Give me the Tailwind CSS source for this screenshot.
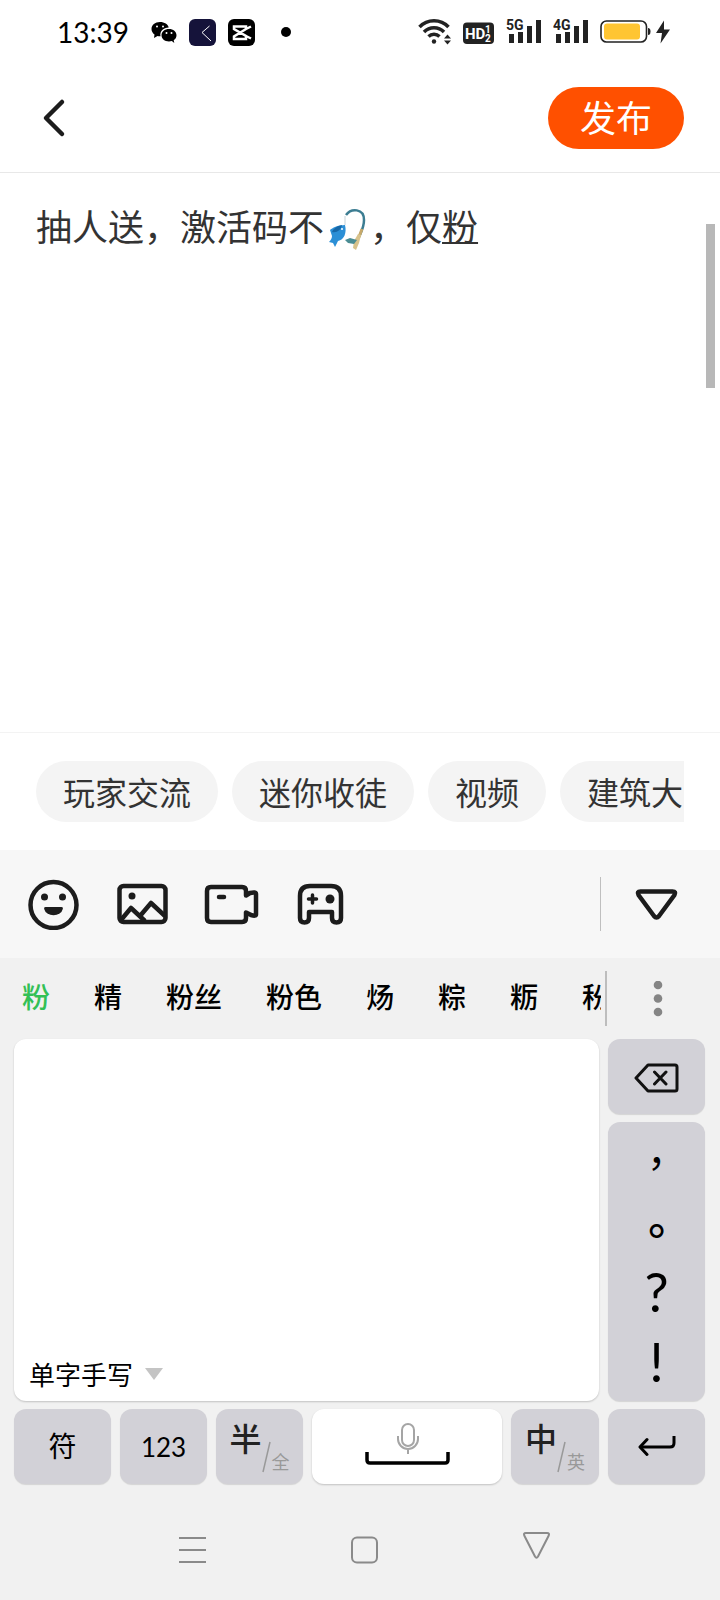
<!DOCTYPE html>
<html lang="zh-CN">
<head>
  <meta charset="UTF-8">
  <meta name="viewport" content="width=device-width, initial-scale=1.0">
  <title>发布帖子</title>
  <script src="https://cdn.jsdelivr.net/npm/@tailwindcss/browser@4"></script>
</head>
<body class="min-h-screen flex flex-col bg-white text-[#333333] font-['Noto_Sans_CJK_SC',sans-serif] overflow-x-hidden">

  <!-- 状态栏 -->
  <div class="h-16 flex items-center justify-between pl-[57px] pr-[50px]">
    <div class="flex items-center gap-3">
      <span class="w-[82px] text-[28px] leading-8 text-black font-['Lato',sans-serif]">13:39</span>
      <svg class="w-[26px] h-6" viewBox="0 0 26 24">
        <path d="M9 2C4 2 .5 5 .5 9c0 2.300 1.200 4.200 3 5.500L3 18l3.500-2c1 .3 2 .4 3 .3C8.500 11 12.500 7.500 17.700 7.500 17 4.300 13.500 2 9 2z" fill="#000"/>
        <path d="M18 9c-4.300 0-7.500 2.700-7.500 6.200s3.200 6.200 7.500 6.200c1 0 2-.1 2.800-.4L23.300 23l-.6-2.700c1.700-1.200 2.800-3 2.800-5.100C25.500 11.700 22.300 9 18 9z" fill="#000"/>
        <g fill="#fff"><circle cx="6" cy="6.500" r="1"/><circle cx="12" cy="6.500" r="1"/><circle cx="15.500" cy="13" r="1"/><circle cx="20.500" cy="13" r="1"/></g>
      </svg>
      <svg class="w-[27px] h-[27px]" viewBox="0 0 27 27">
        <rect width="27" height="27" rx="6" fill="#15133a"/>
        <path d="M20.500 7L13 13.500l9 8.500" fill="none" stroke="#fff" stroke-width="1"/>
      </svg>
      <svg class="w-[27px] h-[27px]" viewBox="0 0 27 27">
        <rect width="27" height="27" rx="6" fill="#000"/>
        <path d="M23 7.500L18 10M23 19.500L18 17M18 10V7.500H6v2.500l12 7v3H6v-2.500L18 10" fill="none" stroke="#fff" stroke-width="2.500"/>
      </svg>
      <span class="ml-[14px] w-[10px] h-[10px] rounded-full bg-black"></span>
    </div>
    <div class="flex items-center gap-3 text-[#222222]">
      <svg class="w-[34px] h-[26px]" viewBox="0 0 34 26" fill="none" stroke="currentColor" stroke-width="3.500">
        <path d="M2.500 8a20 20 0 0 1 29 0M7 13a14 14 0 0 1 20 0M11.500 17.500a8 8 0 0 1 11 0"/>
        <circle cx="17" cy="22.500" r="2.200" fill="currentColor" stroke="none"/>
        <path d="M27 19.500l3.500-4 3.500 4zM27 21.500l3.500 4 3.500-4z" fill="currentColor" stroke="none"/>
      </svg>
      <svg class="w-[31px] h-[26px]" viewBox="0 0 31 26">
        <rect y="3.500" width="31" height="21.500" rx="4" fill="currentColor"/>
        <g fill="#fff" font-family="Roboto, sans-serif" font-weight="700">
          <text x="2" y="20" font-size="15">HD</text>
          <text x="22" y="14" font-size="10">1</text>
          <text x="22" y="23" font-size="10">2</text>
        </g>
      </svg>
      <svg class="w-[35px] h-[26px]" viewBox="0 0 35 26" fill="currentColor">
        <text x="0" y="11" font-size="14" font-weight="700" font-family="Roboto, sans-serif">5G</text>
        <path d="M3 15h5v9H3zM12 13h5v11h-5zM21 7h5v17h-5zM30 1h5v23h-5z"/>
      </svg>
      <svg class="w-[35px] h-[26px]" viewBox="0 0 35 26" fill="currentColor">
        <text x="0" y="11" font-size="14" font-weight="700" font-family="Roboto, sans-serif">4G</text>
        <path d="M3 15h5v9H3zM12 13h5v11h-5zM21 7h5v17h-5zM30 1h5v23h-5z"/>
      </svg>
      <svg class="w-[70px] h-[26px]" viewBox="0 0 70 26">
        <rect x="1" y="2" width="45.500" height="21" rx="5.500" fill="none" stroke="currentColor" stroke-width="1.600"/>
        <rect x="4" y="4.500" width="36" height="16" rx="3" fill="#ffc532"/>
        <path d="M48 9q2.500 0 2.500 3.500T48 16z" fill="currentColor"/>
        <path d="M64 1.500L56 14h6l-1.500 10.500L70 10.500h-6z" fill="currentColor"/>
      </svg>
    </div>
  </div>

  <!-- 顶部栏 -->
  <header class="h-[109px] flex items-center justify-between pl-9 pr-9 border-b border-[#e8e8e8]">
    <button type="button" aria-label="返回" class="w-9 h-12 flex items-center justify-center">
      <svg class="w-6 h-10" viewBox="0 0 24 40" fill="none" stroke="#1c1c1c" stroke-width="4.500" stroke-linecap="round" stroke-linejoin="round"><path d="M20 4L4 20l16 16"/></svg>
    </button>
    <button type="button" class="w-[136px] h-[62px] pb-1 rounded-full bg-[#ff5000] text-white text-[36px] leading-[58px]">发布</button>
  </header>

  <!-- 正文输入 -->
  <main class="relative flex-1 flex flex-col">
    <div role="textbox" contenteditable="true" aria-multiline="true" aria-label="正文" class="flex-1 px-9 pt-[26px] text-[36px] leading-[52px] outline-none">抽人送，激活码不<svg class="inline-block align-middle w-[46px] h-11 -mt-1" viewBox="0 0 46 44" role="img" aria-label="钓鱼竿">
        <path d="M21 18V9" stroke="#c5d2d8" stroke-width="1" fill="none"/>
        <path d="M22 8C27 1 40 1 40 13c0 7-2 10-5 17" stroke="#3c7d92" stroke-width="2.500" fill="none"/>
        <path d="M35 30l3-8" stroke="#c8a96a" stroke-width="3"/>
        <path d="M29 41l1-7 4-7 3 1-2 8-3 7z" fill="#d8c28b"/>
        <path d="M21 33l5-2 7 2-3 4-6-1z" fill="#4a8c93"/>
        <path d="M21 18c-7 0-13 3-15 5l2 6c0 2-1 4-3 6l4 1 2 4 3-6c6-1 9-8 7-16z" fill="#2b8fd6"/>
        <path d="M18 18c-5 1-9 4-10 7 5 1 9-2 10-7z" fill="#1668a8"/>
        <circle cx="18" cy="22" r="1" fill="#fff"/>
      </svg>，仅<u class="decoration-2 underline-offset-[1px] [text-decoration-skip-ink:none]">粉</u></div>
    <span class="absolute right-[5px] top-[51px] w-[9px] h-[164px] bg-[#b8b8b8]"></span>
  </main>

  <!-- 话题 -->
  <div class="border-t border-[#f3f3f3] px-9 py-7">
    <div class="flex gap-[14px] overflow-hidden text-[32px] leading-[61px] whitespace-nowrap">
      <button type="button" class="shrink-0 px-[27px] rounded-full bg-[#f4f4f4]">玩家交流</button>
      <button type="button" class="shrink-0 px-[27px] rounded-full bg-[#f4f4f4]">迷你收徒</button>
      <button type="button" class="shrink-0 px-[27px] rounded-full bg-[#f4f4f4]">视频</button>
      <button type="button" class="shrink-0 px-[27px] rounded-full bg-[#f4f4f4]">建筑大师</button>
    </div>
  </div>

  <!-- 工具栏 -->
  <div class="h-[108px] flex items-center bg-[#f7f7f7] text-[#1c1c1c] pl-[26px] pr-[35px]">
    <div class="flex-1 flex items-center gap-[34px]">
      <button type="button" aria-label="表情">
        <svg class="w-14 h-[52px]" viewBox="0 0 56 52" fill="none" stroke="currentColor" stroke-width="4.500">
          <circle cx="27.500" cy="27" r="23"/>
          <g fill="currentColor" stroke="none"><circle cx="18.500" cy="19" r="3.500"/><circle cx="36.500" cy="19" r="3.500"/><path d="M19.500 29h16c1.500 0 1.500 1 1.300 2a9.500 8 0 0 1-18.600 0c-.2-1-.2-2 1.300-2z"/></g>
        </svg>
      </button>
      <button type="button" aria-label="图片">
        <svg class="w-14 h-[52px]" viewBox="0 0 56 52" fill="none" stroke="currentColor" stroke-width="4.500" stroke-linejoin="round">
          <rect x="3.500" y="8" width="46" height="36" rx="4"/>
          <circle cx="16" cy="18" r="3.500" fill="currentColor" stroke="none"/>
          <path d="M5 42l10-12 14 13M24 38l11-13L49 38"/>
        </svg>
      </button>
      <button type="button" aria-label="视频">
        <svg class="w-14 h-[52px] overflow-visible" viewBox="0 0 56 52" fill="none" stroke="currentColor" stroke-width="4.500" stroke-linejoin="round" stroke-linecap="round">
          <path d="M5 9h31q4 0 4 4v4.500l4-2.500q6-1.500 6 1v20.500q0 2-5 .5l-5-2.500V40q0 4-4 4H5q-4 0-4-4V13q0-4 4-4z"/>
          <path d="M13 19h5"/>
        </svg>
      </button>
      <button type="button" aria-label="游戏">
        <svg class="w-14 h-[52px]" viewBox="0 0 56 52" fill="none" stroke="currentColor" stroke-width="4.500" stroke-linejoin="round" stroke-linecap="round">
          <path d="M14 8h21q10 0 10 10v22q0 4.500-4.500 4.500T36 40v-6H13v6q0 4.500-4.500 4.500T4 40V18Q4 8 14 8z"/>
          <path d="M16.500 17v8M12.500 21h8" stroke-width="3.500"/>
          <circle cx="34" cy="21" r="4.500" fill="currentColor" stroke="none"/>
        </svg>
      </button>
    </div>
    <span class="w-px h-[54px] bg-[#bfbfbf] mr-[30px]"></span>
    <button type="button" aria-label="收起">
      <svg class="w-[54px] h-9" viewBox="0 0 54 36" fill="none" stroke="currentColor" stroke-width="4.500" stroke-linejoin="round"><path d="M9.500 5.500h32q4 0 2 3.500L28 30q-2.500 3-5 0L7.500 9q-2-3.500 2-3.500z"/></svg>
    </button>
  </div>

  <!-- 输入法 -->
  <div class="bg-[#f1f1f1] text-black">
    <div class="h-[81px] flex items-center pl-[22px]">
      <div class="flex-1 flex gap-11 mr-1 pb-[6px] overflow-hidden whitespace-nowrap text-[28px] leading-10 font-medium">
        <button type="button" class="shrink-0 text-[#33c055]">粉</button>
        <button type="button" class="shrink-0">精</button>
        <button type="button" class="shrink-0">粉丝</button>
        <button type="button" class="shrink-0">粉色</button>
        <button type="button" class="shrink-0">炀</button>
        <button type="button" class="shrink-0">粽</button>
        <button type="button" class="shrink-0">粝</button>
        <button type="button" class="shrink-0">秎</button>
      </div>
      <span class="w-[2px] h-[55px] bg-[#bdbdbd]"></span>
      <button type="button" aria-label="更多" class="w-[113px] flex justify-center pr-[11px]">
        <svg class="w-[10px] h-9" viewBox="0 0 10 36" fill="#858585"><circle cx="5" cy="4" r="4.300"/><circle cx="5" cy="17.500" r="4.300"/><circle cx="5" cy="31" r="4.300"/></svg>
      </button>
    </div>

    <div class="grid grid-cols-[97fr_87fr_87fr_190fr_88fr_97fr] grid-rows-[75px_279px_75px] gap-x-[9px] gap-y-2 pl-[14px] pr-[15px]">
      <!-- 手写区 -->
      <div class="col-span-5 row-span-2 flex items-end rounded-xl bg-white shadow-[0_1px_2px_rgba(0,0,0,0.2)] px-[15px] pb-[7px]">
        <button type="button" class="flex items-center gap-[11px] text-[26px] leading-10">
          单字手写
          <svg class="w-5 h-3" viewBox="0 0 20 12"><path d="M1 0h18l-9 12z" fill="#c4c4c4"/></svg>
        </button>
      </div>
      <button type="button" aria-label="删除" class="flex items-center justify-center rounded-xl bg-[#d2d1d7] shadow-[0_1px_1px_rgba(0,0,0,0.12)]">
        <svg class="w-[46px] h-8" viewBox="0 0 46 32" fill="none" stroke="#111" stroke-width="3" stroke-linejoin="round" stroke-linecap="round"><path d="M14 4h27q2 0 2 2v22q0 2-2 2H14L2 17zM20.500 11l11.500 12M32 11L20.500 23"/></svg>
      </button>
      <div class="grid grid-rows-4 rounded-xl bg-[#d2d1d7] shadow-[0_1px_1px_rgba(0,0,0,0.12)]">
        <button type="button" lang="zh-TW" class="pt-2 text-[40px] leading-[60px] font-['Noto_Sans_CJK_TC',sans-serif]">，</button>
        <button type="button" lang="zh-TW" class="pt-1 text-[44px] leading-[64px] font-medium font-['Noto_Sans_CJK_TC',sans-serif]">。</button>
        <button type="button" class="pb-2 text-[54px] leading-[60px] font-['Lato',sans-serif]">?</button>
        <button type="button" class="pb-2 text-[54px] leading-[60px] font-['Lato',sans-serif]">!</button>
      </div>

      <!-- 底部按键 -->
      <button type="button" class="pb-1 rounded-xl bg-[#d2d1d7] shadow-[0_1px_1px_rgba(0,0,0,0.12)] text-[28px] leading-10">符</button>
      <button type="button" class="rounded-xl bg-[#d2d1d7] shadow-[0_1px_1px_rgba(0,0,0,0.12)] text-[26px] leading-10 font-['Lato',sans-serif]">123</button>
      <button type="button" class="flex justify-center rounded-xl bg-[#d2d1d7] shadow-[0_1px_1px_rgba(0,0,0,0.12)] pt-2">
        <span class="text-[32px] leading-10 font-medium text-[#222222]">半</span>
        <svg class="w-[10px] h-8 mt-6" viewBox="0 0 10 32"><path d="M1 31L8 1" stroke="#999" stroke-width="1.500"/></svg>
        <span class="mt-8 text-[18px] leading-6 text-[#999999]">全</span>
      </button>
      <button type="button" aria-label="空格" class="flex items-center justify-center rounded-xl bg-white shadow-[0_1px_2px_rgba(0,0,0,0.2)]">
        <svg class="w-[86px] h-12" viewBox="0 0 86 48" fill="none">
          <rect x="38" y="1" width="12" height="22" rx="6" stroke="#a5a5a5" stroke-width="2"/>
          <path d="M34 13v3a10 10 0 0 0 20 0v-3M44 26v5" stroke="#a5a5a5" stroke-width="2"/>
          <path d="M3 29v8q0 3 3 3h75q3 0 3-3v-8" stroke="#000" stroke-width="3.500"/>
        </svg>
      </button>
      <button type="button" class="flex justify-center rounded-xl bg-[#d2d1d7] shadow-[0_1px_1px_rgba(0,0,0,0.12)] pt-2">
        <span class="text-[32px] leading-10 font-medium text-[#222222]">中</span>
        <svg class="w-[10px] h-8 mt-6" viewBox="0 0 10 32"><path d="M1 31L8 1" stroke="#999" stroke-width="1.500"/></svg>
        <span class="mt-8 text-[18px] leading-6 text-[#999999]">英</span>
      </button>
      <button type="button" aria-label="换行" class="flex items-center justify-center rounded-xl bg-[#d2d1d7] shadow-[0_1px_1px_rgba(0,0,0,0.12)]">
        <svg class="w-[38px] h-[22px]" viewBox="0 0 38 22" fill="none" stroke="#000" stroke-width="3"><path d="M36 0v7q0 4-4 4H2"/><path d="M9 3.500L2 11l7 7.500" stroke-linejoin="round" stroke-linecap="round"/></svg>
      </button>
    </div>

    <!-- 系统导航 -->
    <nav class="h-[116px] flex items-center justify-center gap-[145px] pl-2 pt-4 text-[#8a8a8a]">
      <button type="button" aria-label="最近任务">
        <svg class="w-[27px] h-10" viewBox="0 0 27 40" stroke="currentColor" stroke-width="2"><path d="M0 8h27M0 20h27M0 32h27"/></svg>
      </button>
      <button type="button" aria-label="主屏幕">
        <svg class="w-[27px] h-10" viewBox="0 0 27 40" fill="none" stroke="currentColor" stroke-width="2"><rect x="1" y="7.500" width="25" height="25" rx="5"/></svg>
      </button>
      <button type="button" aria-label="返回上级">
        <svg class="w-[27px] h-10" viewBox="0 0 27 40" fill="none" stroke="currentColor" stroke-width="2" stroke-linejoin="round"><path d="M3 3h21q3 0 1.500 3L15 26.500q-1.500 2.500-3 0L1.500 6Q0 3 3 3z"/></svg>
      </button>
    </nav>
  </div>
</body>
</html>
